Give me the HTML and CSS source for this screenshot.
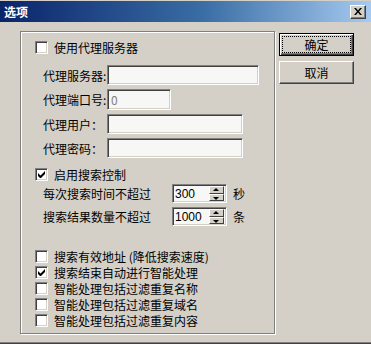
FILE: index.html
```html
<!DOCTYPE html>
<html lang="zh-CN">
<head>
    <meta charset="UTF-8">
    <title>选项</title>
    <link rel="stylesheet" href="styles.css">
</head>
<body>
    <div id="dialog">
        <div class="titlebar">
            <span class="title">选项</span>
            <span class="close-btn">
                <svg width="8" height="7" viewBox="0 0 8 7"><path d="M0 0h2l2 2.5L6 0h2L5 3.5 8 7H6L4 4.5 2 7H0l3-3.5z" fill="#000"/></svg>
            </span>
        </div>
        <div class="content">
            <div class="group">
                <label class="check-row first">
                    <span class="box"></span>使用代理服务器
                </label>
                <div class="fields">
                    <span class="label">代理服务器:</span><span class="input w152"></span>
                    <span class="label">代理端口号:</span><span class="input w64"><span class="port">0</span></span>
                    <span class="label">代理用户：</span><span class="input w136"></span>
                    <span class="label">代理密码：</span><span class="input w136"></span>
                </div>
                <label class="check-row search">
                    <span class="box checked"><svg width="7" height="7" viewBox="0 0 7 7"><path d="M0 2v3l2 2h1l4-4V0L2.5 4.5z" fill="#000"/></svg></span>启用搜索控制
                </label>
                <div class="spins">
                    <span class="label">每次搜索时间不超过</span>
                    <span class="spin"><span class="val">300</span><span class="arrows"><span class="up"></span><span class="down"></span></span></span>
                    <span class="unit">秒</span>
                    <span class="label">搜索结果数量不超过</span>
                    <span class="spin"><span class="val">1000</span><span class="arrows"><span class="up"></span><span class="down"></span></span></span>
                    <span class="unit">条</span>
                </div>
                <div class="options">
                    <label class="check-row"><span class="box"></span>搜索有效地址 (降低搜索速度)</label>
                    <label class="check-row"><span class="box checked"><svg width="7" height="7" viewBox="0 0 7 7"><path d="M0 2v3l2 2h1l4-4V0L2.5 4.5z" fill="#000"/></svg></span>搜索结束自动进行智能处理</label>
                    <label class="check-row"><span class="box"></span>智能处理包括过滤重复名称</label>
                    <label class="check-row"><span class="box"></span>智能处理包括过滤重复域名</label>
                    <label class="check-row"><span class="box"></span>智能处理包括过滤重复内容</label>
                </div>
            </div>
            <div class="buttons">
                <button class="default"><span>确定</span></button>
                <button><span>取消</span></button>
            </div>
        </div>
    </div>
</body>
</html>
```

FILE: styles.css
```css
body {
    margin: 0;
    background-color: #d4d0c8;
    font-family: "SimSun", "Noto Sans CJK SC", sans-serif;
    font-size: 12px;
    color: #000;
}
#dialog {
    width: 371px;
    height: 344px;
    box-sizing: border-box;
    background-color: #d4d0c8;
    border-bottom: 1px solid #404040;
    box-shadow: inset 0 -1px 0 #808080;
    overflow: hidden;
}
.titlebar {
    height: 21px;
    display: flex;
    align-items: center;
    justify-content: space-between;
    padding: 0 4px 0 4px;
    background: linear-gradient(to right, #0a246a 0%, #3a6ea5 55%, #a6caf0 100%);
    border-top: 1px solid #d4d0c8;
}
.title {
    color: #fff;
    font-weight: bold;
    font-size: 12px;
    letter-spacing: 0;
}
.close-btn {
    width: 16px;
    height: 14px;
    box-sizing: border-box;
    background-color: #d4d0c8;
    border: 1px solid;
    border-color: #fff #404040 #404040 #fff;
    box-shadow: inset -1px -1px 0 #808080;
    display: flex;
    align-items: center;
    justify-content: center;
    margin-right: 1px;
}
.content {
    display: flex;
    align-items: flex-start;
    padding: 9px 0 0 20px;
}
.group {
    width: 255px;
    height: 303px;
    box-sizing: border-box;
    border: 1px solid #808080;
    box-shadow: inset 1px 1px 0 #fff, 1px 1px 0 #fff;
    padding: 0 0 0 14px;
}
.check-row {
    display: flex;
    align-items: center;
    height: 16px;
    gap: 6px;
}
.check-row.first {
    margin-top: 7px;
}
.box {
    width: 13px;
    height: 13px;
    box-sizing: border-box;
    background-color: #fff;
    border: 1px solid;
    border-color: #808080 #fff #fff #808080;
    box-shadow: inset 1px 1px 0 #404040, inset -1px -1px 0 #d4d0c8;
    display: flex;
    align-items: center;
    justify-content: center;
    flex-shrink: 0;
}
.fields {
    display: grid;
    grid-template-columns: 64px auto;
    row-gap: 4px;
    align-items: center;
    margin: 10px 0 0 8px;
}
.label {
    white-space: nowrap;
}
.input {
    height: 20px;
    box-sizing: border-box;
    background-color: #f7f7f5;
    border: 1px solid;
    border-color: #808080 #fff #fff #808080;
    box-shadow: inset 1px 1px 0 #404040, inset -1px -1px 0 #d4d0c8;
    display: flex;
    align-items: center;
}
.w152 { width: 152px; }
.w64 { width: 64px; height: 21px; }
.w136 { width: 136px; }
.port {
    color: #808080;
    padding-left: 3px;
}
.check-row.search {
    margin-top: 8px;
}
.spins {
    display: grid;
    grid-template-columns: 129px 55px auto;
    column-gap: 0;
    row-gap: 4px;
    align-items: center;
    margin: 2px 0 0 8px;
}
.spin {
    width: 55px;
    height: 19px;
    box-sizing: border-box;
    background-color: #f7f7f5;
    border: 1px solid;
    border-color: #808080 #fff #fff #808080;
    box-shadow: inset 1px 1px 0 #404040, inset -1px -1px 0 #d4d0c8;
    display: flex;
    align-items: center;
    justify-content: space-between;
    padding: 2px 2px 2px 2px;
}
.val {
    font-family: "Liberation Sans", Arial, sans-serif;
    font-size: 12px;
}
.arrows {
    width: 15px;
    height: 15px;
    display: flex;
    flex-direction: column;
}
.up, .down {
    flex: 1;
    background-color: #d4d0c8;
    border: 1px solid;
    border-color: #fff #404040 #404040 #fff;
    position: relative;
}
.up::after, .down::after {
    content: "";
    position: absolute;
    left: 3px;
    top: 1px;
    border-left: 3px solid transparent;
    border-right: 3px solid transparent;
}
.up::after {
    border-bottom: 3px solid #000;
}
.down::after {
    border-top: 3px solid #000;
    top: 2px;
}
.unit {
    padding-left: 6px;
}
.options {
    margin-top: 22px;
}
.buttons {
    display: flex;
    flex-direction: column;
    gap: 5px;
    margin: 2px 0 0 4px;
}
button {
    width: 75px;
    height: 23px;
    padding: 0;
    background-color: #d4d0c8;
    font-family: "SimSun", "Noto Sans CJK SC", sans-serif;
    font-size: 12px;
    color: #000;
    border: 1px solid;
    border-color: #fff #404040 #404040 #fff;
    box-shadow: inset -1px -1px 0 #808080;
    display: flex;
    align-items: center;
    justify-content: center;
}
button.default {
    border: 1px solid #000;
    box-shadow: inset 1px 1px 0 #fff, inset -1px -1px 0 #404040, inset -2px -2px 0 #808080;
    padding: 3px;
}
button.default span {
    flex: 1;
    align-self: stretch;
    display: flex;
    align-items: center;
    justify-content: center;
    outline: 1px dotted #000;
    outline-offset: 0;
}
```
